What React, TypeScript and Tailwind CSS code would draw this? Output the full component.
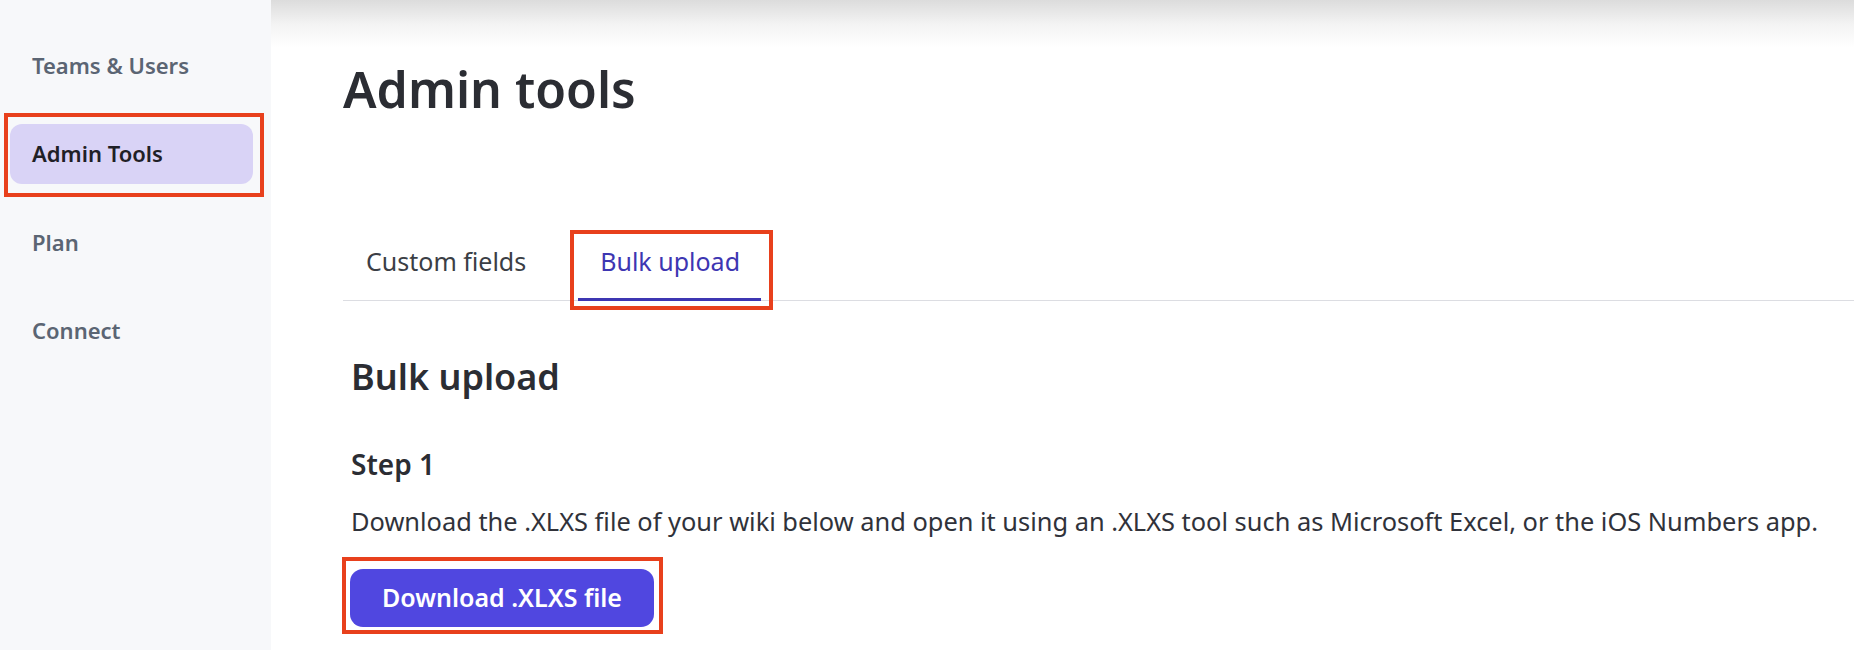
import React from "react";

const navItems = ["Teams & Users", "Admin Tools", "Plan", "Connect"];

export default function App() {
  return (
    <div className="flex w-[1854px] h-[650px] overflow-hidden bg-white font-['Noto_Sans','Open_Sans',sans-serif]">
      <aside className="w-[271px] shrink-0 bg-[#f7f8fa] pt-[35px] pl-[10px] pr-[18px] flex flex-col gap-[28.5px] relative z-10">
        {navItems.map((item) => {
          const active = item === "Admin Tools";
          return (
            <div key={item} className="relative">
              <div
                className={
                  active
                    ? "h-[60px] flex items-center pl-[22px] rounded-[12px] bg-[#d9d3f6] text-[#1f2026] text-[22px] font-semibold"
                    : "h-[60px] flex items-center pl-[22px] rounded-[12px] text-[#5b6573] text-[22px] font-semibold"
                }
              >
                {item}
              </div>
              {active && (
                <div className="absolute left-[-6px] right-[-11px] top-[-11px] bottom-[-13px] border-[4px] border-[#e8401c]" />
              )}
            </div>
          );
        })}
      </aside>
      <main className="relative flex-1 pl-[72px]">
        <div className="absolute top-0 left-0 right-0 h-[48px] bg-gradient-to-b from-[#dcdcdc] via-[#f3f3f3] to-white/0" />
        <h1 className="relative mt-[59px] text-[50px] leading-[60px] font-semibold text-[#2b2d33]">Admin tools</h1>
        <div className="mt-[124px] flex gap-[29px] border-b border-[#dcdde2]">
          <div className="px-[23px] pb-[19px] text-[25px] leading-[36px] text-[#3b3e45]">Custom fields</div>
          <div className="relative -mb-px pl-[22px] pr-[21px] pb-[19px] border-b-[3px] border-[#3d36b2] text-[25px] leading-[36px] text-[#3d36b2]">
            Bulk upload
            <div className="absolute left-[-8px] right-[-12px] top-[-13px] bottom-[-12px] border-[4px] border-[#e8401c]" />
          </div>
        </div>
        <div className="pl-[8px]">
          <h2 className="mt-[55px] text-[36px] leading-[42px] font-semibold text-[#2b2d33]">Bulk upload</h2>
          <h3 className="mt-[49px] text-[28px] leading-[34px] font-semibold text-[#2b2d33]">Step 1</h3>
          <p className="mt-[22px] text-[25.4px] leading-[36px] text-[#30323a]">
            Download the .XLXS file of your wiki below and open it using an .XLXS tool such as Microsoft Excel, or the iOS Numbers app.
          </p>
          <div className="relative mt-[30px] -ml-px inline-block">
            <button className="h-[58px] w-[304px] rounded-[13px] bg-[#5047e0] text-white text-[25px] font-semibold">
              Download .XLXS file
            </button>
            <div className="absolute left-[-8px] right-[-9px] top-[-12px] bottom-[-7px] border-[4px] border-[#e8401c]" />
          </div>
        </div>
      </main>
    </div>
  );
}
